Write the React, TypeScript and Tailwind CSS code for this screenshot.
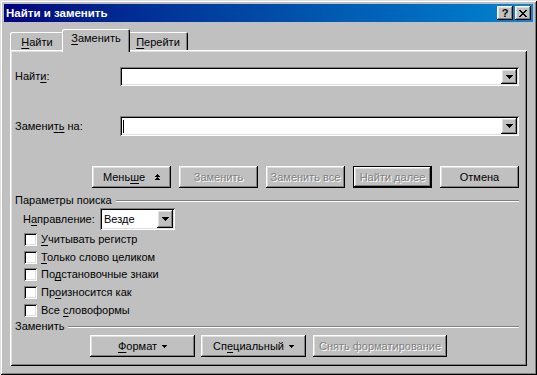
import React from "react";

const raised =
  "shadow-[inset_-1px_-1px_0_#000,inset_1px_1px_0_#fff,inset_-2px_-2px_0_#808080,inset_2px_2px_0_#dfdfdf]";
const sunken =
  "shadow-[inset_1px_1px_0_#808080,inset_-1px_-1px_0_#fff,inset_2px_2px_0_#000,inset_-2px_-2px_0_#dfdfdf]";
const disabledText = "text-[#808080] [text-shadow:1px_1px_0_#fff]";

function DownArrow() {
  return (
    <svg width="7" height="4" viewBox="0 0 7 4" shapeRendering="crispEdges">
      <path d="M0 0h7v1H0z M1 1h5v1H1z M2 2h3v1H2z M3 3h1v1H3z" fill="#000" />
    </svg>
  );
}

function SmallDown() {
  return (
    <svg width="5" height="3" viewBox="0 0 5 3" shapeRendering="crispEdges">
      <path d="M0 0h5v1H0z M1 1h3v1H1z M2 2h1v1H2z" fill="#000" />
    </svg>
  );
}

function UpArrows() {
  return (
    <svg width="5" height="6" viewBox="0 0 5 6" shapeRendering="crispEdges">
      <path d="M2 0h1v1H2z M1 1h3v1H1z M0 2h5v1H0z M2 3h1v1H2z M1 4h3v1H1z M0 5h5v1H0z" fill="#000" />
    </svg>
  );
}

function DropBtn() {
  return (
    <div className={`my-[2px] mr-[2px] w-[16px] bg-[#c0c0c0] flex items-center justify-center ${raised}`}>
      <DownArrow />
    </div>
  );
}

function Combo({ cursor }: { cursor?: boolean }) {
  return (
    <div className={`flex-1 flex h-full bg-white ${sunken}`}>
      <div className="flex-1 flex items-center">
        {cursor && <div className="ml-[3px] w-[1px] h-[13px] bg-black" />}
      </div>
      <DropBtn />
    </div>
  );
}

function Btn({
  w,
  children,
  disabled,
  def,
  className = "",
}: {
  w: string;
  children: React.ReactNode;
  disabled?: boolean;
  def?: boolean;
  className?: string;
}) {
  const sh = def
    ? "shadow-[inset_0_0_0_1px_#000,inset_-2px_-2px_0_#000,inset_2px_2px_0_#fff,inset_-3px_-3px_0_#808080,inset_3px_3px_0_#dfdfdf]"
    : raised;
  return (
    <div
      className={`${w} h-full bg-[#c0c0c0] flex items-center justify-center ${sh} ${
        disabled ? disabledText : ""
      } ${className}`}
    >
      {children}
    </div>
  );
}

function Check({ children }: { children: React.ReactNode }) {
  return (
    <div className="ml-[9px] flex items-center gap-[4px] h-[18px]">
      <div className={`w-[13px] h-[13px] bg-white ${sunken}`} />
      <span>{children}</span>
    </div>
  );
}

function Group({ label }: { label: string }) {
  return (
    <div className="flex items-center h-[13px]">
      <span>{label}</span>
      <div className="flex-1 ml-[4px] h-[2px] border-t border-t-[#808080] border-b border-b-white" />
    </div>
  );
}

const u = "underline underline-offset-[2px] decoration-1";

export default function App() {
  return (
    <div
      className={`w-[537px] h-[375px] bg-[#c0c0c0] p-[4px] flex flex-col font-['Liberation_Sans',Arial,sans-serif] text-[11px] leading-[13px] text-black shadow-[inset_1px_1px_0_#dfdfdf,inset_-1px_-1px_0_#000,inset_2px_2px_0_#fff,inset_-2px_-2px_0_#808080]`}
    >
      {/* Title bar */}
      <div className="h-[18px] flex items-center bg-linear-to-r from-[#000080] to-[#1084d0] pl-[2px] pr-[2px]">
        <span className="flex-1 text-white font-bold text-[11.5px]">Найти и заменить</span>
        <div className="flex gap-[2px]">
          <div className={`w-[16px] h-[14px] bg-[#c0c0c0] flex items-center justify-center font-bold text-[11px] leading-none ${raised}`}>
            ?
          </div>
          <div className={`w-[16px] h-[14px] bg-[#c0c0c0] flex items-center justify-center ${raised}`}>
            <svg width="8" height="7" viewBox="0 0 8 7" shapeRendering="crispEdges">
              <path
                d="M0 0h2v1H0z M6 0h2v1H6z M1 1h2v1H1z M5 1h2v1H5z M2 2h4v1H2z M3 3h2v1H3z M2 4h4v1H2z M1 5h2v1H1z M5 5h2v1H5z M0 6h2v1H0z M6 6h2v1H6z"
                fill="#000"
              />
            </svg>
          </div>
        </div>
      </div>

      <div className="pl-[6px] pr-[6px] pt-[7px] flex flex-col">
        {/* Tabs */}
        <div className="relative z-10 flex items-end h-[21px]">
          <div className="w-[54px] h-[18px] pt-[4px] flex justify-center bg-[#c0c0c0] rounded-tl-[2px] shadow-[inset_1px_1px_0_#fff,inset_-1px_0_0_#000,inset_-2px_0_0_#808080]">
            <span>
              <span className={u}>Н</span>айти
            </span>
          </div>
          <div className="relative z-10 -mx-[2px] w-[68px] h-[23px] -mb-[2px] pt-[3px] flex justify-center bg-[#c0c0c0] rounded-t-[2px] shadow-[inset_1px_1px_0_#fff,inset_-1px_0_0_#000,inset_-2px_0_0_#808080]">
            <span>
              <span className={u}>З</span>аменить
            </span>
          </div>
          <div className="w-[60px] h-[18px] pt-[4px] flex justify-center bg-[#c0c0c0] rounded-tr-[2px] shadow-[inset_1px_1px_0_#fff,inset_-1px_0_0_#000,inset_-2px_0_0_#808080]">
            <span>
              <span className={u}>П</span>ерейти
            </span>
          </div>
        </div>

        {/* Panel */}
        <div className="h-[316px] flex flex-col pl-[5px] pr-[8px] shadow-[inset_1px_1px_0_#fff,inset_-1px_-1px_0_#000,inset_2px_2px_0_#dfdfdf,inset_-2px_-2px_0_#808080]">
          <div className="mt-[17px] flex h-[19px] items-center">
            <div className="w-[105px]">
              Найт<span className={u}>и</span>:
            </div>
            <Combo />
          </div>
          <div className="mt-[30px] flex h-[20px] items-center">
            <div className="w-[105px]">
              Замени<span className={u}>т</span>
              <span className={u}>ь</span> на:
            </div>
            <Combo cursor />
          </div>

          <div className="mt-[30px] h-[22px] ml-[77px] flex gap-[8px]">
            <Btn w="w-[79px]">
              <span>
                Мень<span className={u}>ш</span>е
              </span>
              <span className="ml-[10px] flex">
                <UpArrows />
              </span>
            </Btn>
            <Btn w="w-[79px]" disabled>
              Заменить
            </Btn>
            <Btn w="w-[79px]" disabled>
              Заменить все
            </Btn>
            <Btn w="w-[79px]" disabled def>
              Найти далее
            </Btn>
            <Btn w="w-[79px]">Отмена</Btn>
          </div>

          <div className="mt-[6px]">
            <Group label="Параметры поиска" />
          </div>

          <div className="mt-[1px] h-[22px] flex items-center">
            <div className="ml-[8px] w-[77px]">
              Н<span className={u}>а</span>правление:
            </div>
            <div className={`w-[75px] h-full flex bg-white ${sunken}`}>
              <div className="flex-1 flex items-center pl-[4px]">Везде</div>
              <DropBtn />
            </div>
          </div>

          <div className="flex flex-col">
            <Check>
              <span className={u}>У</span>читывать регистр
            </Check>
            <Check>
              <span className={u}>Т</span>олько слово целиком
            </Check>
            <div className="h-[17px] flex">
              <div className="ml-[9px] flex items-center gap-[4px] h-[17px]">
                <div className={`w-[13px] h-[13px] bg-white ${sunken}`} />
                <span>
                  По<span className={u}>д</span>становочные знаки
                </span>
              </div>
            </div>
            <Check>
              Пр<span className={u}>о</span>износится как
            </Check>
            <Check>
              Все <span className={u}>с</span>ловоформы
            </Check>
          </div>

          <div className="mt-[1px]">
            <Group label="Заменить" />
          </div>

          <div className="mt-[2px] h-[22px] ml-[75px] flex">
            <Btn w="w-[105px]">
              <span>
                <span className={u}>Ф</span>ормат
              </span>
              <span className="ml-[5px] flex">
                <SmallDown />
              </span>
            </Btn>
            <Btn w="w-[105px]" className="ml-[6px]">
              <span>
                Сп<span className={u}>е</span>циальный
              </span>
              <span className="ml-[5px] flex">
                <SmallDown />
              </span>
            </Btn>
            <Btn w="w-[134px]" className="ml-[7px]" disabled>
              Снять форматирование
            </Btn>
          </div>
        </div>
      </div>
    </div>
  );
}
